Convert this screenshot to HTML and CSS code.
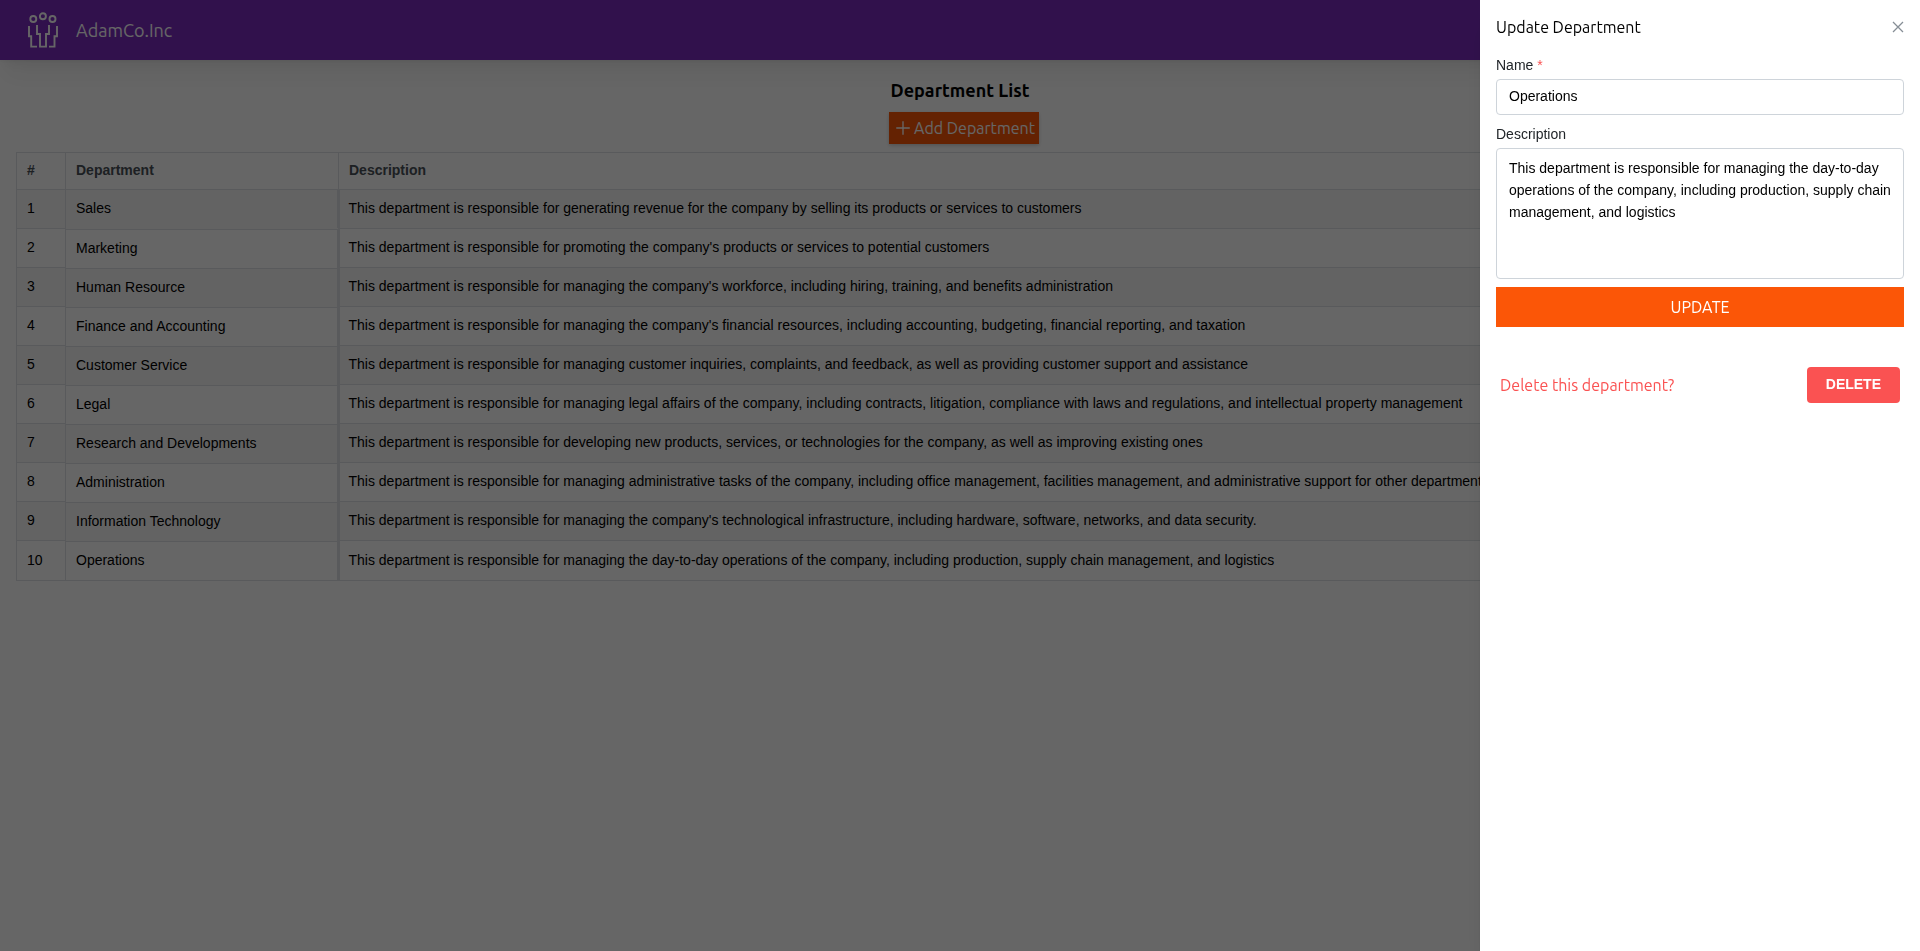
FILE: index.html
```html
<!DOCTYPE html>
<html lang="en">
<head>
<meta charset="utf-8">
<title>AdamCo.Inc - Departments</title>
<link rel="stylesheet" href="styles.css">
</head>
<body>
<header class="topbar">
  <svg class="logo" viewBox="0 0 36 40" fill="none" stroke="currentColor" stroke-width="1.9" aria-hidden="true">
    <circle cx="9.3" cy="9" r="3"/><circle cx="18.9" cy="6.3" r="3"/><circle cx="28.5" cy="9" r="3"/>
    <path d="M5 16v10.2h2.2v10.4H13M13 15v9h3v12.600h6V24h3v-9M33 16v10.200h-2.500v10.400H25"/>
  </svg>
  <span class="brand">AdamCo.Inc</span>
</header>
<main class="page">
  <h1 class="title">Department List</h1>
  <button class="add" type="button">
    <svg class="plus" viewBox="0 0 16 16" stroke="currentColor" stroke-width="1.2" aria-hidden="true"><path d="M8 2v12M2 8h12"/></svg>
    Add Department
  </button>
  <table class="list">
    <thead><tr><th class="num">#</th><th class="name">Department</th><th>Description</th></tr></thead>
    <tbody>
      <tr><td>1</td><td class="dept">Sales</td><td>This department is responsible for generating revenue for the company by selling its products or services to customers</td></tr>
      <tr><td>2</td><td class="dept">Marketing</td><td>This department is responsible for promoting the company's products or services to potential customers</td></tr>
      <tr><td>3</td><td class="dept">Human Resource</td><td>This department is responsible for managing the company's workforce, including hiring, training, and benefits administration</td></tr>
      <tr><td>4</td><td class="dept">Finance and Accounting</td><td>This department is responsible for managing the company's financial resources, including accounting, budgeting, financial reporting, and taxation</td></tr>
      <tr><td>5</td><td class="dept">Customer Service</td><td>This department is responsible for managing customer inquiries, complaints, and feedback, as well as providing customer support and assistance</td></tr>
      <tr><td>6</td><td class="dept">Legal</td><td>This department is responsible for managing legal affairs of the company, including contracts, litigation, compliance with laws and regulations, and intellectual property management</td></tr>
      <tr><td>7</td><td class="dept">Research and Developments</td><td>This department is responsible for developing new products, services, or technologies for the company, as well as improving existing ones</td></tr>
      <tr><td>8</td><td class="dept">Administration</td><td>This department is responsible for managing administrative tasks of the company, including office management, facilities management, and administrative support for other departments</td></tr>
      <tr><td>9</td><td class="dept">Information Technology</td><td>This department is responsible for managing the company's technological infrastructure, including hardware, software, networks, and data security.</td></tr>
      <tr><td>10</td><td class="dept">Operations</td><td>This department is responsible for managing the day-to-day operations of the company, including production, supply chain management, and logistics</td></tr>
    </tbody>
  </table>
</main>
<div class="overlay"></div>
<aside class="drawer" role="dialog" aria-labelledby="drawer-title">
  <div class="drawer-head">
    <h2 class="drawer-title" id="drawer-title">Update Department</h2>
    <button class="close" type="button" aria-label="Close">
      <svg viewBox="0 0 12 12" stroke="currentColor" stroke-width="1.300" aria-hidden="true"><path d="M1 1l10 10M11 1L1 11"/></svg>
    </button>
  </div>
  <form class="form">
    <label class="label" for="name">Name <span class="required">*</span></label>
    <input class="field" id="name" type="text" value="Operations">
    <label class="label" for="description">Description</label>
    <textarea class="field area" id="description" rows="5">This department is responsible for managing the day-to-day operations of the company, including production, supply chain management, and logistics</textarea>
    <button class="update" type="button">UPDATE</button>
  </form>
  <div class="danger">
    <span class="question">Delete this department?</span>
    <button class="delete" type="button">DELETE</button>
  </div>
</aside>
</body>
</html>
```

FILE: styles.css
```css
* { box-sizing: border-box; }
body {
  margin: 0;
  background: #fff;
  color: #000;
  font: 14px/22px "Liberation Sans", Arial, sans-serif;
}
button, input, textarea { font: inherit; }
.topbar {
  display: flex;
  align-items: center;
  gap: 16px;
  height: 60px;
  padding: 0 24px;
  background: #7b2cbf;
  color: #fff;
  box-shadow: 0 1px 3px rgba(0, 0, 0, .05), 0 20px 25px -5px rgba(0, 0, 0, .05), 0 10px 10px -5px rgba(0, 0, 0, .04);
}
.logo { width: 36px; height: 40px; }
.brand { font: 18px/28px Ubuntu, "Noto Sans", sans-serif; }
.page {
  display: flex;
  flex-direction: column;
  align-items: center;
  padding: 16px;
}
.title {
  margin: 0;
  font: bold 18px/28px Ubuntu, "Noto Sans", sans-serif;
}
.add {
  display: flex;
  align-items: center;
  gap: 2px;
  height: 32px;
  margin: 8px 0 8px 8px;
  padding: 0 4px 0 5px;
  border: 0;
  background: #fb5607;
  color: #fff;
  font: 16px/28px Ubuntu, "Noto Sans", sans-serif;
  white-space: nowrap;
  box-shadow: 0 1px 3px rgba(0, 0, 0, .1), 0 2px 4px rgba(0, 0, 0, .1);
}
.plus { width: 18px; height: 18px; }
.list {
  width: 100%;
  border: 1px solid #dee2e6;
  border-collapse: collapse;
}
.list th, .list td {
  padding: 7px 10px 9px;
  border-right: 1px solid #dee2e6;
  text-align: left;
}
.list th {
  padding: 6px 10px 8px;
  border-bottom: 1px solid #dee2e6;
  color: #495057;
}
.list tbody tr + tr td { border-top: 1px solid #dee2e6; }
.list tbody tr:nth-child(odd) { background: #f8f8f8; }
.list tbody tr:last-child td { padding-top: 8px; }
.list tbody tr:last-child .dept { padding-top: 7px; }
.list tbody .dept + td {
  padding-left: 9px;
  border-left: 2px solid #dee2e6;
}
.num { width: 49px; }
.name { width: 273px; }
.list .dept { display: flex; }
.overlay {
  position: fixed;
  inset: 0;
  background: rgba(0, 0, 0, .6);
}
.drawer {
  position: fixed;
  inset: 0 0 0 auto;
  width: 440px;
  padding: 16px;
  background: #fff;
  box-shadow: 0 1px 3px rgba(0, 0, 0, .05), 0 20px 25px -5px rgba(0, 0, 0, .1), 0 10px 10px -5px rgba(0, 0, 0, .1);
}
.drawer-head {
  display: flex;
  align-items: center;
  justify-content: space-between;
  margin-bottom: 16px;
}
.drawer-title {
  margin: 0;
  font: 16px/22px Ubuntu, "Noto Sans", sans-serif;
}
.close {
  display: flex;
  padding: 0;
  border: 0;
  background: none;
  color: #868e96;
}
.close svg { width: 12px; height: 12px; }
.form { display: flex; flex-direction: column; }
.label { margin-bottom: 3px; color: #212529; }
.required { color: #fa5252; }
.field {
  height: 36px;
  margin-bottom: 8px;
  padding: 0 12px 3px;
  border: 1px solid #ced4da;
  border-radius: 4px;
  background: #fff;
  color: #000;
}
.area {
  height: 131px;
  padding: 8px 12px;
  resize: none;
}
.update {
  height: 40px;
  border: 0;
  background: #fb5607;
  color: #fff;
  font: 16px/24px Ubuntu, "Noto Sans", sans-serif;
}
.danger {
  display: flex;
  align-items: center;
  justify-content: space-between;
  margin-top: 40px;
  padding: 0 4px;
}
.question {
  color: #fa5252;
  font: 16px/24px Ubuntu, "Noto Sans", sans-serif;
}
.delete {
  height: 36px;
  padding: 0 19px 3px;
  border: 0;
  border-radius: 4px;
  background: #fa5252;
  color: #fff;
  font-weight: bold;
}
```
